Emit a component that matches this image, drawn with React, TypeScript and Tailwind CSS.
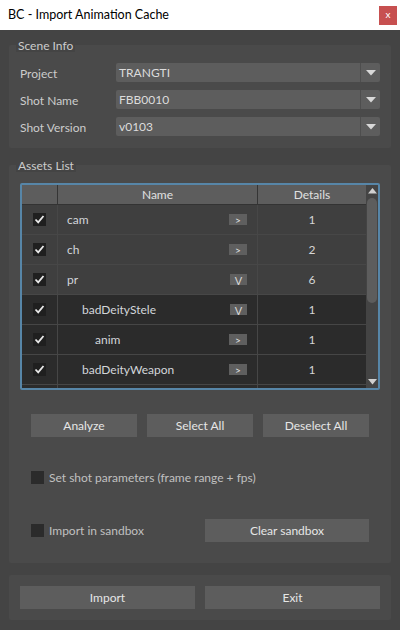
import React from "react";

type Row = { name: string; indent: number; btn: string; det: string; dark: boolean };

const rows: Row[] = [
  { name: "cam", indent: 0, btn: ">", det: "1", dark: false },
  { name: "ch", indent: 0, btn: ">", det: "2", dark: false },
  { name: "pr", indent: 0, btn: "V", det: "6", dark: false },
  { name: "badDeityStele", indent: 1, btn: "V", det: "1", dark: true },
  { name: "anim", indent: 2, btn: ">", det: "1", dark: true },
  { name: "badDeityWeapon", indent: 1, btn: ">", det: "1", dark: true },
  { name: "anim", indent: 2, btn: ">", det: "1", dark: true },
];

function Check() {
  return (
    <div className="w-[13px] h-[13px] bg-[#1f1f1f] flex items-center justify-center">
      <svg width="11" height="11" viewBox="0 0 11 11">
        <polyline points="1.5,5.5 4.2,8.3 9.5,2" fill="none" stroke="#e8e8e8" strokeWidth="1.8" />
      </svg>
    </div>
  );
}

function Combo({ value }: { value: string }) {
  return (
    <div className="flex h-[19px] w-[264px] rounded-[2px] bg-[#5d5d5d]">
      <div className="flex-1 pl-[3px] pt-[1px] flex items-center text-[#dcdcdc]">{value}</div>
      <div className="w-[20px] border-l border-[#4e4e4e] flex items-center justify-center">
        <svg width="10" height="6" viewBox="0 0 10 6">
          <polygon points="0,0 10,0 5,5.5" fill="#d8d8d8" />
        </svg>
      </div>
    </div>
  );
}

function Btn({ label, w }: { label: string; w: string }) {
  return (
    <div className={`${w} h-[23px] bg-[#5d5d5d] flex items-center justify-center pt-[1px] text-[#e6e6e6]`}>{label}</div>
  );
}

export default function App() {
  return (
    <div className="w-[400px] h-[630px] bg-[#444444] flex flex-col font-['Lato',sans-serif] text-[12px] leading-none overflow-hidden">
      {/* Title bar */}
      <div className="h-[30px] bg-white flex items-center justify-between pl-[8px] pr-[3px] shrink-0">
        <span className="text-[12.5px] text-black">BC - Import Animation Cache</span>
        <div className="w-[18px] h-[19px] bg-[#c75050] flex items-center justify-center text-white text-[10px] pb-[2px]">x</div>
      </div>

      <div className="flex flex-col px-[9px]">
        {/* Scene Info */}
        <div className="relative mt-[15px] bg-[#4a4a4a] rounded-[2px] pt-[18px] pb-[12px] pl-[11px] pr-[11px] flex flex-col gap-[8px]">
          <div className="absolute left-[7px] top-[-6px] bg-[#444444] px-[2px] h-[13px] flex items-center text-[#cccccc]">Scene Info</div>
          {[
            ["Project", "TRANGTI"],
            ["Shot Name", "FBB0010"],
            ["Shot Version", "v0103"],
          ].map(([l, v]) => (
            <div key={l} className="flex items-center justify-between">
              <span className="text-[#cccccc] pt-[2px]">{l}</span>
              <Combo value={v} />
            </div>
          ))}
        </div>

        {/* Assets List */}
        <div className="relative mt-[17px] bg-[#4a4a4a] rounded-[2px] pt-[18px] pb-[21px] flex flex-col">
          <div className="absolute left-[7px] top-[-6px] bg-[#444444] px-[2px] h-[13px] flex items-center text-[#cccccc]">Assets List</div>

          <div className="mx-[11px] w-[360px] border-2 border-[#5786a8] rounded-[2px] flex bg-[#3f3f3f]">
            <div className="flex flex-col w-[344px]">
              <div className="flex h-[20px] bg-[#5d5d5d] border-b border-[#333333] text-[#e0e0e0]">
                <div className="w-[36px] border-r border-[#353535]"></div>
                <div className="w-[200px] border-r border-[#353535] flex items-center justify-center">Name</div>
                <div className="w-[108px] flex items-center justify-center">Details</div>
              </div>
              <div className="h-[183px] overflow-hidden flex flex-col">
                {rows.map((r, i) => (
                  <div
                    key={i}
                    className={`flex h-[30px] shrink-0 border-b ${r.dark ? "bg-[#2b2b2b] border-[#464646]" : "bg-[#3f3f3f] border-[#474747]"}`}
                  >
                    <div className={`w-[36px] flex items-center justify-center border-r ${r.dark ? "border-[#464646]" : "border-[#474747]"}`}>
                      <Check />
                    </div>
                    <div className={`w-[200px] flex items-center justify-between pr-[10px] border-r ${r.dark ? "border-[#464646]" : "border-[#474747]"} ${r.indent === 0 ? "pl-[9px]" : r.indent === 1 ? "pl-[24px]" : "pl-[37px]"}`}>
                      <span className="text-[#d2d6da] pt-[1px]">{r.name}</span>
                      {r.btn === ">" ? (
                        <div className="w-[18px] h-[11px] bg-[#5f5f5f] flex items-center justify-center text-[#e8e8e8] text-[10px]">&gt;</div>
                      ) : (
                        <div className="w-[17px] h-[11px] bg-[#5f5f5f] flex items-center justify-center text-[#d8d8d8] text-[11px] pt-[1px]">V</div>
                      )}
                    </div>
                    <div className="w-[108px] flex items-center justify-center text-[#d6d6d6] pt-[1px]">{r.det}</div>
                  </div>
                ))}
              </div>
            </div>
            {/* Scrollbar */}
            <div className="w-[12px] bg-[#444444] flex flex-col items-center pt-[3px] pb-[3px]">
              <svg width="9" height="6" viewBox="0 0 9 6" className="shrink-0">
                <polygon points="0,5.5 9,5.5 4.5,0" fill="#d0d0d0" />
              </svg>
              <div className="w-[10px] h-[105px] bg-[#5d5d5d] rounded-[5px] mt-[4px]"></div>
              <div className="flex-1"></div>
              <svg width="9" height="6" viewBox="0 0 9 6" className="shrink-0">
                <polygon points="0,0 9,0 4.5,5.5" fill="#d0d0d0" />
              </svg>
            </div>
          </div>

          <div className="flex gap-[10px] pl-[22px] mt-[24px]">
            <Btn label="Analyze" w="w-[106px]" />
            <Btn label="Select All" w="w-[106px]" />
            <Btn label="Deselect All" w="w-[106px]" />
          </div>

          <div className="flex items-center gap-[5px] pl-[22px] mt-[34px]">
            <div className="w-[13px] h-[13px] bg-[#2b2b2b]"></div>
            <span className="text-[#c0c0c0] pt-[1px]">Set shot parameters (frame range + fps)</span>
          </div>

          <div className="flex items-center pl-[22px] mt-[35px]">
            <div className="w-[174px] flex items-center gap-[5px]">
              <div className="w-[13px] h-[13px] bg-[#2b2b2b]"></div>
              <span className="text-[#c0c0c0] pt-[1px]">Import in sandbox</span>
            </div>
            <Btn label="Clear sandbox" w="w-[164px]" />
          </div>
        </div>

        {/* Bottom */}
        <div className="mt-[12px] bg-[#4a4a4a] rounded-[2px] h-[45px] flex items-center gap-[10px] px-[11px]">
          <Btn label="Import" w="w-[175px]" />
          <Btn label="Exit" w="w-[175px]" />
        </div>
      </div>
    </div>
  );
}
